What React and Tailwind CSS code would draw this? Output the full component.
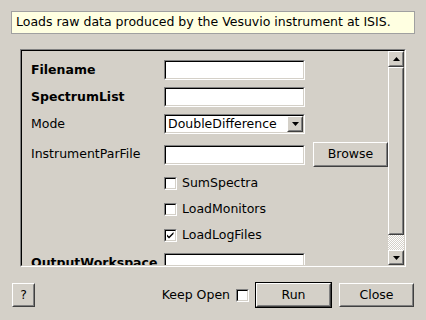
import React from "react";

const Sunken = ({ className = "", innerClass = "", children }) => (
  <div className={"border border-t-[#808080] border-l-[#808080] border-b-white border-r-white " + className}>
    <div className={"h-full w-full border border-t-[#000000] border-l-[#000000] border-b-[#d4d0c8] border-r-[#d4d0c8] " + innerClass}>
      {children}
    </div>
  </div>
);

const Raised = ({ className = "", innerClass = "", children }) => (
  <div className={"border border-t-white border-l-white border-b-[#404040] border-r-[#404040] " + className}>
    <div className={"h-full w-full border border-t-[#d4d0c8] border-l-[#d4d0c8] border-b-[#808080] border-r-[#808080] flex items-center justify-center " + innerClass}>
      {children}
    </div>
  </div>
);

const Input = () => <Sunken className="w-[141px] h-[20px]" innerClass="bg-white" />;

const Check = ({ checked }) => (
  <Sunken className="w-[13px] h-[13px]" innerClass="bg-white relative">
    {checked && (
      <svg width="9" height="9" viewBox="0 0 9 9" className="absolute left-0 top-0">
        <path d="M1 3.5 L3 5.5 L7.5 1 L7.5 3 L3 7.5 L1 5.5 Z" fill="#000" />
      </svg>
    )}
  </Sunken>
);

const TriUp = () => (
  <svg width="7" height="4" viewBox="0 0 7 4"><path d="M3.5 0 L7 4 L0 4 Z" fill="#000" /></svg>
);
const TriDown = () => (
  <svg width="7" height="4" viewBox="0 0 7 4"><path d="M0 0 L7 0 L3.5 4 Z" fill="#000" /></svg>
);

export default function App() {
  return (
    <div className="w-[426px] h-[320px] bg-[#d4d0c8] overflow-hidden text-[12.5px] text-black leading-none" style={{ fontFamily: '"DejaVu Sans", sans-serif' }}>
      <div className="pt-[11px] px-[11px]">
        <div className="h-[23px] border border-[#a0a0a0] bg-[#ffffe1] flex items-center pl-[4px]">
          Loads raw data produced by the Vesuvio instrument at ISIS.
        </div>
      </div>
      <div className="mt-[15px] ml-[20px] w-[386px] h-[218px] border border-t-[#808080] border-l-[#808080] border-b-white border-r-white">
        <div className="h-full w-full border border-t-[#000000] border-l-[#000000] border-b-[#d4d0c8] border-r-[#d4d0c8] flex">
          <div className="flex-1 overflow-hidden flex flex-col pl-[9px] pt-[9px]">
            <div className="h-[20px] flex items-center shrink-0">
              <div className="w-[133px] font-bold">Filename</div>
              <Input />
            </div>
            <div className="h-[20px] mt-[7px] flex items-center shrink-0">
              <div className="w-[133px] font-bold">SpectrumList</div>
              <Input />
            </div>
            <div className="h-[20px] mt-[7px] flex items-center shrink-0">
              <div className="w-[133px]">Mode</div>
              <Sunken className="w-[141px] h-[20px]" innerClass="bg-white flex items-center justify-between">
                <span className="pl-[2px]">DoubleDifference</span>
                <Raised className="w-[16px] h-[16px] bg-[#d4d0c8]"><TriDown /></Raised>
              </Sunken>
            </div>
            <div className="h-[25px] mt-[8px] flex items-center shrink-0">
              <div className="w-[133px]">InstrumentParFile</div>
              <Input />
              <Raised className="ml-[8px] w-[75px] h-[25px]">Browse</Raised>
            </div>
            <div className="h-[20px] mt-[6px] flex items-center shrink-0 pl-[133px]">
              <Check />
              <span className="ml-[5px]">SumSpectra</span>
            </div>
            <div className="h-[20px] mt-[6px] flex items-center shrink-0 pl-[133px]">
              <Check />
              <span className="ml-[5px]">LoadMonitors</span>
            </div>
            <div className="h-[20px] mt-[6px] flex items-center shrink-0 pl-[133px]">
              <Check checked />
              <span className="ml-[5px]">LoadLogFiles</span>
            </div>
            <div className="h-[20px] mt-[8px] flex items-center shrink-0">
              <div className="w-[133px] font-bold">OutputWorkspace</div>
              <Input />
            </div>
          </div>
          <div className="w-[16px] flex flex-col shrink-0">
            <Raised className="h-[16px] shrink-0"><TriUp /></Raised>
            <Raised className="h-[168px] shrink-0" />
            <div className="flex-1 bg-[repeating-conic-gradient(#ffffff_0_25%,#d4d0c8_0_50%)] bg-[length:2px_2px]" />
            <Raised className="h-[15px] shrink-0"><TriDown /></Raised>
          </div>
        </div>
      </div>
      <div className="mt-[15px] h-[26px] flex items-center">
        <Raised className="ml-[12px] w-[23px] h-[24px]">?</Raised>
        <div className="ml-auto mr-[12px] flex items-center">
          <span>Keep Open</span>
          <div className="ml-[6px]"><Check /></div>
          <div className="ml-[6px] w-[77px] h-[26px] border border-black">
            <Raised className="w-full h-full">Run</Raised>
          </div>
          <Raised className="ml-[7px] w-[75px] h-[24px]">Close</Raised>
        </div>
      </div>
    </div>
  );
}
